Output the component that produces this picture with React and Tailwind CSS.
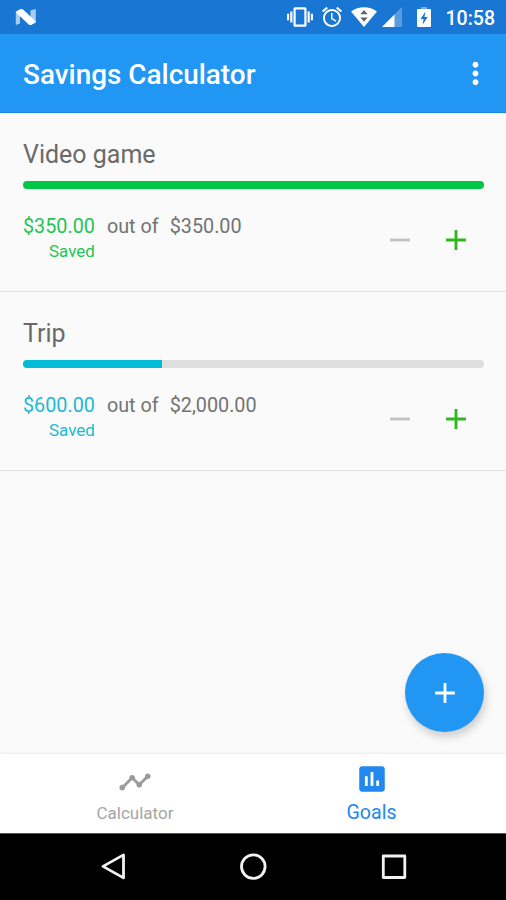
import { MdAdd, MdRemove, MdMoreVert, MdAlarm, MdVibration, MdTimeline, MdAssessment } from "react-icons/md";

const goals = [
  {
    name: "Video game",
    saved: "$350.00",
    total: "$350.00",
    percent: 100,
    bar: "bg-[#00c846]",
    text: "text-[#1fc653]",
  },
  {
    name: "Trip",
    saved: "$600.00",
    total: "$2,000.00",
    percent: 30.2,
    bar: "bg-[#00bcd4]",
    text: "text-[#1db9d3]",
  },
];

function StatusBar() {
  return (
    <div className="h-[34px] bg-[#1976d2] flex items-center pl-[15px] pr-[11px] text-white">
      <svg className="w-[22px] h-[18px]" viewBox="0 0 22 18">
        <path d="M.8 3.500 5 1.500v14L.8 17z" fill="#a9cdf2" />
        <path d="M15.500 2.500 20.800 1v14l-5.300 2z" fill="#a9cdf2" />
        <path d="M.8 4.300 4.600 1.600c1.200-.8 2.800-.7 3.800.2L20.800 13.500l-3.800 3c-1 .8-2.400.7-3.300-.1z" fill="#fff" />
      </svg>

      <div className="ml-auto flex items-center">
        <MdVibration size={26} />
        <MdAlarm size={24} className="ml-[7px]" />
        {/* Wifi */}
        <svg className="ml-[7px] w-[26px] h-5" viewBox="0 0 26 20">
          <path d="M0 4.500C7-1.200 19-1.200 26 4.500L13 20z" fill="#fff" />
          <path d="M9.300 7.300 13 3l3.700 4.300zM9.300 10.500h7.400L13 14.800z" fill="#5f6368" />
        </svg>
        {/* Signal */}
        <svg className="ml-[5px] w-5 h-5" viewBox="0 0 20 20">
          <path d="M0 20 20 0v20z" fill="#5a9ade" />
          <path d="M0 20 12.500 7.500V20z" fill="#fff" />
        </svg>
        {/* Battery */}
        <svg className="ml-[15px] w-[14px] h-5" viewBox="0 0 14 20">
          <path d="M4 0h6v2H4z" fill="#75ade4" />
          <rect y="2" width="14" height="18" rx="1" fill="#fff" />
          <path d="M8.500 4.500 3.500 12h3l-.8 5.500 5-7.500H7.500z" fill="#1976d2" />
        </svg>
        <span className="ml-[15px] pt-[3px] text-[19.5px] leading-none font-medium">10:58</span>
      </div>
    </div>
  );
}

function GoalItem({ goal }) {
  return (
    <div className="h-[179px] border-b border-[#e1e1e1] pl-[23px] pr-[22px] pt-[26px]">
      <h2 className="text-[25px] leading-8 text-[#6a6a6a]">{goal.name}</h2>
      <div className="mt-[10px] h-2 rounded-full bg-[#dedede] overflow-hidden">
        <div className={`h-full ${goal.bar}`} style={{ width: `${goal.percent}%` }}></div>
      </div>

      <div className="flex justify-between">
        <div className="flex mt-[26px] text-[19.8px] leading-6 text-[#737373]">
          <div className={`text-right ${goal.text}`}>
            <div>{goal.saved}</div>
            <div className="text-[17px] leading-6">Saved</div>
          </div>
          <span className="ml-3">out of</span>
          <span className="ml-[11px]">{goal.total}</span>
        </div>
        <div className="flex gap-[22px] mt-[34px] mr-[11px] h-[34px]">
          <button aria-label="Remove money" className="text-[#c2c2c2]">
            <MdRemove size={34} />
          </button>
          <button aria-label="Add money" className="text-[#2fb71d]">
            <MdAdd size={34} />
          </button>
        </div>
      </div>
    </div>
  );
}

export default function App() {
  return (
    <div className="w-[506px] h-[900px] flex flex-col bg-[#fafafa] font-['Roboto',sans-serif] overflow-hidden">
      <StatusBar />

      <header className="h-[79px] bg-[#2196f3] border-b border-[#1c86e0] flex items-center justify-between pl-[23px] pr-[13px] text-white">
        <h1 className="pt-1 text-[27.9px] font-medium">Savings Calculator</h1>
        <MdMoreVert size={35} />
      </header>

      <main className="relative flex-1">
        {goals.map((goal) => (
          <GoalItem key={goal.name} goal={goal} />
        ))}
        <button
          aria-label="Add goal"
          className="absolute right-[22px] bottom-[22px] size-[79px] rounded-full bg-[#2196f3] text-white flex items-center justify-center shadow-[2px_5px_9px_rgba(0,0,0,0.18)]"
        >
          <MdAdd size={34} />
        </button>
      </main>

      {/* Bottom tabs */}
      <nav className="h-[79px] bg-white flex shadow-[0_-1px_2px_rgba(0,0,0,0.06)]">
        <a className="w-[270px] flex flex-col items-center pt-[11px] text-[#9b9b9b]">
          <MdTimeline size={34} />
          <span className="mt-0.5 text-[17px] leading-6 text-[#a5a5a5]">Calculator</span>
        </a>
        <a className="w-[203px] flex flex-col items-center pt-2 text-[#2088ee]">
          <MdAssessment size={34} />
          <span className="mt-[3px] text-[19.6px] leading-7">Goals</span>
        </a>
      </nav>

      {/* Android buttons */}
      <div className="h-[67px] bg-black border-t border-[#555] flex items-center pl-[100px] text-[#f2f2f2]">
        <svg className="size-7" viewBox="0 0 28 28" fill="none" stroke="currentColor" strokeWidth="2.8" strokeLinejoin="round">
          <path d="M23.500 1.900v23L3 13.400z" />
        </svg>
        <svg className="ml-[111px] size-7" viewBox="0 0 28 28" fill="none" stroke="currentColor" strokeWidth="2.8">
          <circle cx="14.300" cy="13.600" r="11.800" />
        </svg>
        <svg className="ml-[113px] size-7" viewBox="0 0 28 28" fill="none" stroke="currentColor" strokeWidth="2.8" strokeLinejoin="round">
          <rect x="3.300" y="3" width="21.500" height="21.500" />
        </svg>
      </div>
    </div>
  );
}
